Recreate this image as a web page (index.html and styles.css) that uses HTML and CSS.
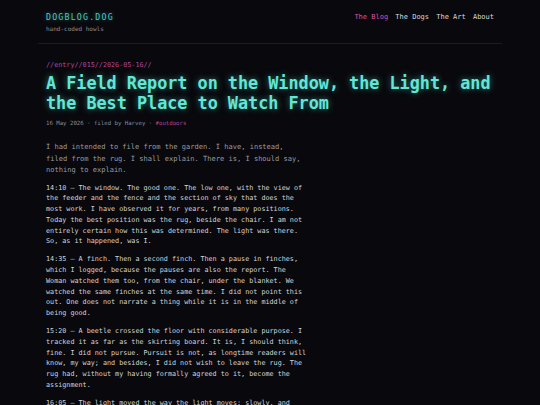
FILE: index.html
```html
<!DOCTYPE html>
<html lang="en">
<head>
<meta charset="utf-8">
<title>DOGBLOG.DOG</title>
<link rel="stylesheet" href="styles.css">
</head>
<body>
<div class="wrap">
  <header class="site-header">
    <div class="brand">
      <div class="logo">DOGBLOG.DOG</div>
      <div class="tagline">hand-coded howls</div>
    </div>
    <nav class="nav">
      <a class="nav-link active" href="#">The Blog</a>
      <a class="nav-link" href="#">The Dogs</a>
      <a class="nav-link" href="#">The Art</a>
      <a class="nav-link" href="#">About</a>
    </nav>
  </header>
  <article class="post">
    <div class="kicker">//entry//015//2026-05-16//</div>
    <h1 class="title">A Field Report on the Window, the Light, and the Best Place to Watch From</h1>
    <div class="meta">16 May 2026 · filed by Harvey · <span class="tag">#outdoors</span></div>
    <div class="body">
      <p class="intro">I had intended to file from the garden. I have, instead, filed from the rug. I shall explain. There is, I should say, nothing to explain.</p>
      <p class="para">14:10 — The window. The good one. The low one, with the view of the feeder and the fence and the section of sky that does the most work. I have observed it for years, from many positions. Today the best position was the rug, beside the chair. I am not entirely certain how this was determined. The light was there. So, as it happened, was I.</p>
      <p class="para">14:35 — A finch. Then a second finch. Then a pause in finches, which I logged, because the pauses are also the report. The Woman watched them too, from the chair, under the blanket. We watched the same finches at the same time. I did not point this out. One does not narrate a thing while it is in the middle of being good.</p>
      <p class="para">15:20 — A beetle crossed the floor with considerable purpose. I tracked it as far as the skirting board. It is, I should think, fine. I did not pursue. Pursuit is not, as longtime readers will know, my way; and besides, I did not wish to leave the rug. The rug had, without my having formally agreed to it, become the assignment.</p>
      <p class="para">16:05 — The light moved the way the light moves: slowly, and then all at once, and I moved with it, a little, as one does.</p>
    </div>
  </article>
</div>
</body>
</html>
```

FILE: styles.css
```css
html, body {
  margin: 0;
  padding: 0;
  background: #09090d;
}
body {
  font-family: "DejaVu Sans Mono", "Liberation Mono", monospace;
  color: #d2d2d6;
}
.wrap {
  width: 464px;
  margin: 0 auto;
  box-sizing: border-box;
}
.site-header {
  display: flex;
  justify-content: space-between;
  align-items: flex-start;
  padding: 12px 8px 10px;
  border-bottom: 1px solid #1b1b22;
}
.logo {
  font-size: 8.25px;
  line-height: 10px;
  font-weight: 500;
  letter-spacing: 1.2px;
  color: #4cc9bf;
  text-shadow: 0 0 4px rgba(76, 201, 191, 0.45);
}
.tagline {
  margin-top: 3px;
  font-size: 6px;
  line-height: 8px;
  color: #8c8c94;
}
.nav {
  display: flex;
  gap: 7.2px;
  font-size: 7px;
  line-height: 10px;
}
.nav-link {
  color: #d6d6da;
  text-decoration: none;
}
.nav-link.active {
  color: #d653b4;
}
.post {
  padding: 16px 8px 0;
}
.kicker {
  font-size: 6.75px;
  line-height: 10px;
  color: #b3479c;
}
.title {
  margin: 3px 0 0;
  font-size: 16.8px;
  line-height: 20px;
  font-weight: bold;
  color: #62e6d6;
  text-shadow: 0 0 6px rgba(70, 220, 205, 0.55);
}
.meta {
  margin-top: 6px;
  font-size: 5.7px;
  line-height: 9px;
  color: #8a8a92;
}
.tag {
  color: #b3479c;
}
.body {
  max-width: 262px;
}
.intro {
  margin: 13px 0 0;
  font-size: 7.05px;
  line-height: 11.5px;
  color: #9a9aa2;
}
.para {
  margin: 7px 0 0;
  font-size: 6.75px;
  line-height: 10.8px;
  color: #d4d4d8;
}
```
